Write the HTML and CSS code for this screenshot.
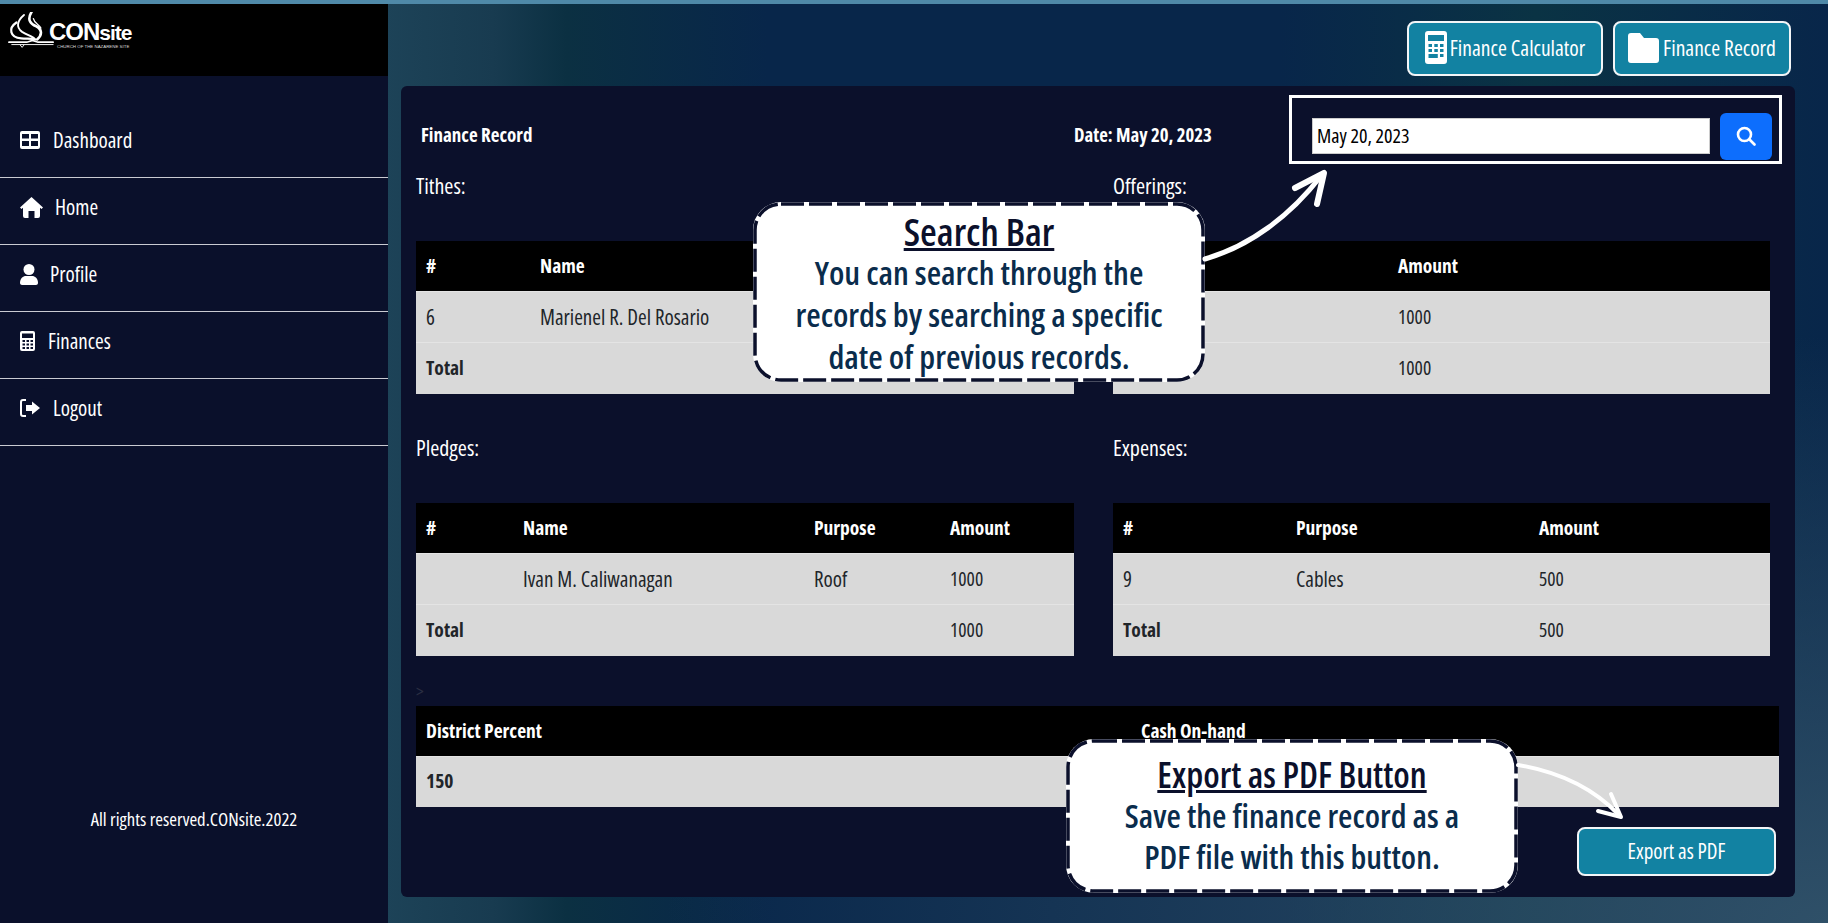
FILE: index.html
```html
<!DOCTYPE html>
<html lang="en">
<head>
    <meta charset="UTF-8">
    <meta name="viewport" content="width=device-width, initial-scale=1.0">
    <title>CONsite Finance Record</title>
    <link rel="stylesheet" href="styles.css">
</head>
<body>
    <div class="top-line"></div>
    <div class="layout">
        <aside class="sidebar">
            <div class="logo-bar">
                <svg class="logo-mark" viewBox="0 0 50 38" fill="none" stroke="#fff" stroke-linecap="round">
                    <path d="M9 11 C0 17 2 27 14 28 C20 28.500 25 28 29 29" stroke-width="2.400"/>
                    <path d="M17 3 C10 9 8 16 15 21 C20 24 26 26 28 28" stroke-width="2"/>
                    <path d="M25 0 C20 8 24 13 30 15 C36 18 37 24 31 29" stroke-width="2.800"/>
                    <path d="M27 7 C28 12 33 13 35 17" stroke-width="1.400"/>
                    <path d="M1 32 H20 L26 30 L32 32 H48" stroke-width="1.800"/>
                    <path d="M4 34.500 H48" stroke-width="1"/>
                    <path d="M13 35 L15 37.500 L17 35" stroke-width="1"/>
                </svg>
                <div class="logo-text">
                    <div class="logo-name">CON<span>site</span></div>
                    <div class="logo-sub">CHURCH OF THE NAZARENE SITE</div>
                </div>
            </div>
            <nav class="side-nav">
                <a class="nav-item" href="#">
                    <svg class="nav-icon" width="20" height="18" viewBox="0 0 20 18"><path fill="#fff" fill-rule="evenodd" d="M2 0h16a2 2 0 0 1 2 2v14a2 2 0 0 1-2 2H2a2 2 0 0 1-2-2V2a2 2 0 0 1 2-2zm0 3v4.500h7V3zm9 0v4.500h7V3zM2 10v5h7v-5zm9 0v5h7v-5z"/></svg>
                    Dashboard
                </a>
                <a class="nav-item home-item" href="#">
                    <svg class="nav-icon" width="23" height="21" viewBox="0 0 23 21"><path fill="#fff" d="M11.500 0 23 10.500l-1.500 1.500-1.500-1.300V19a2 2 0 0 1-2 2h-3.500v-7h-6v7H5a2 2 0 0 1-2-2v-8.300L1.500 12 0 10.500z"/></svg>
                    Home
                </a>
                <a class="nav-item profile-item" href="#">
                    <svg class="nav-icon" width="18" height="21" viewBox="0 0 18 21"><circle cx="9" cy="5.500" r="5.500" fill="#fff"/><path fill="#fff" d="M0 19c0-4.500 3-7 6-7h6c3 0 6 2.500 6 7 0 1.300-1 2-2 2H2c-1 0-2-.7-2-2z"/></svg>
                    Profile
                </a>
                <a class="nav-item" href="#">
                    <svg class="nav-icon" width="15" height="20" viewBox="0 0 15 20"><path fill="#fff" fill-rule="evenodd" d="M2 0h11a2 2 0 0 1 2 2v16a2 2 0 0 1-2 2H2a2 2 0 0 1-2-2V2a2 2 0 0 1 2-2zm0 2.500V7h11V2.500zM2.500 9v2H5V9zm4 0v2H9V9zm4 0v2H13V9zm-8 3.500v2H5v-2zm4 0v2H9v-2zm4 0v2H13v-2zm-8 3.500v2H5v-2zm4 0v2H9v-2zm4 0v2H13v-2z"/></svg>
                    Finances
                </a>
                <a class="nav-item" href="#">
                    <svg class="nav-icon" width="20" height="18" viewBox="0 0 20 18"><path fill="none" stroke="#fff" stroke-width="2" d="M6 1H3a2 2 0 0 0-2 2v12a2 2 0 0 0 2 2h3"/><path fill="#fff" d="M12 2.500 20 9l-8 6.500V12H6V6h6z"/></svg>
                    Logout
                </a>
            </nav>
            <p class="rights">All rights reserved.CONsite.2022</p>
        </aside>

        <main class="content">
            <div class="top-actions">
                <button class="teal-btn calc-btn">
                    <svg width="22" height="33" viewBox="0 0 22 33"><path fill="#fff" fill-rule="evenodd" d="M3 0h16a3 3 0 0 1 3 3v27a3 3 0 0 1-3 3H3a3 3 0 0 1-3-3V3a3 3 0 0 1 3-3zm0 4v6h16V4zm.5 9v3h3.500v-3zm5.800 0v3h3.500v-3zm5.700 0v3h3.500v-3zm-11.500 5v3h3.500v-3zm5.800 0v3h3.500v-3zm5.700 0v3h3.500v-3zm-11.500 5v4h9.300v-4zm11.500 0v3h3.500v-3z"/></svg>
                    Finance Calculator
                </button>
                <button class="teal-btn folder-btn">
                    <svg width="31" height="30" viewBox="0 0 31 30"><path fill="#fff" d="M3 0h9l4 5h12a3 3 0 0 1 3 3v19a3 3 0 0 1-3 3H3a3 3 0 0 1-3-3V3a3 3 0 0 1 3-3z"/></svg>
                    Finance Record
                </button>
            </div>

            <section class="record-card">
                <header class="record-head">
                    <h2 class="record-title">Finance Record</h2>
                    <div class="record-date">Date: May 20, 2023</div>
                    <form class="search-box">
                        <input class="search-input" type="text" value="May 20, 2023">
                        <button class="search-btn" type="button">
                            <svg width="20" height="20" viewBox="0 0 20 20" fill="none" stroke="#fff" stroke-width="2.600" stroke-linecap="round"><circle cx="8.500" cy="8.500" r="6.500"/><path d="M13.500 13.500 18.500 18.500"/></svg>
                        </button>
                    </form>
                </header>

                <div class="record-grid">
                    <div class="record-block">
                        <p class="block-label">Tithes:</p>
                        <table class="money-table tithes">
                            <thead><tr><th>#</th><th>Name</th><th></th></tr></thead>
                            <tbody>
                                <tr><td>6</td><td>Marienel R. Del Rosario</td><td></td></tr>
                                <tr class="total"><td>Total</td><td></td><td></td></tr>
                            </tbody>
                        </table>
                    </div>
                    <div class="record-block">
                        <p class="block-label">Offerings:</p>
                        <table class="money-table offerings">
                            <thead><tr><th></th><th>Amount</th></tr></thead>
                            <tbody>
                                <tr><td></td><td>1000</td></tr>
                                <tr class="total"><td></td><td>1000</td></tr>
                            </tbody>
                        </table>
                    </div>
                    <div class="record-block">
                        <p class="block-label">Pledges:</p>
                        <table class="money-table pledges">
                            <thead><tr><th>#</th><th>Name</th><th>Purpose</th><th>Amount</th></tr></thead>
                            <tbody>
                                <tr><td></td><td>Ivan M. Caliwanagan</td><td>Roof</td><td>1000</td></tr>
                                <tr class="total"><td>Total</td><td></td><td></td><td>1000</td></tr>
                            </tbody>
                        </table>
                    </div>
                    <div class="record-block">
                        <p class="block-label">Expenses:</p>
                        <table class="money-table expenses">
                            <thead><tr><th>#</th><th>Purpose</th><th>Amount</th></tr></thead>
                            <tbody>
                                <tr><td>9</td><td>Cables</td><td>500</td></tr>
                                <tr class="total"><td>Total</td><td></td><td>500</td></tr>
                            </tbody>
                        </table>
                    </div>
                </div>

                <div class="stray">&gt;</div>
                <table class="money-table district">
                    <thead><tr><th>District Percent</th><th>Cash On-hand</th></tr></thead>
                    <tbody>
                        <tr class="total"><td>150</td><td></td></tr>
                    </tbody>
                </table>

                <div class="export-row">
                    <button class="teal-btn export-btn">Export as PDF</button>
                </div>
            </section>
        </main>
    </div>

    <!-- tutorial callouts sit over the page -->
    <div class="callout callout-search">
        <svg class="dash-edge" viewBox="0 0 452 180"><rect x="2" y="2" width="448" height="176" rx="26"/></svg>
        <div class="callout-title">Search Bar</div>
        <div>You can search through the</div>
        <div>records by searching a specific</div>
        <div>date of previous records.</div>
    </div>
    <div class="callout callout-export">
        <svg class="dash-edge" viewBox="0 0 452 154"><rect x="2" y="2" width="448" height="150" rx="26"/></svg>
        <div class="callout-title">Export as PDF Button</div>
        <div>Save the finance record as a</div>
        <div>PDF file with this button.</div>
    </div>
    <svg class="arrows" width="1828" height="923" viewBox="0 0 1828 923" fill="none" stroke="#fff" stroke-linecap="round" stroke-linejoin="round">
        <path d="M1205 259 C1250 246 1290 216 1321 176" stroke-width="5"/>
        <path d="M1295 188 L1324 173 L1317 204" stroke-width="6"/>
        <path d="M1518 765 C1560 772 1595 790 1619 815" stroke-width="4"/>
        <path d="M1598 811 L1621 817 L1611 794" stroke-width="4"/>
    </svg>
</body>
</html>
```

FILE: styles.css
```css
html, body {
    height: 100%;
}

body {
    margin: 0;
    overflow: hidden;
    font-family: "Open Sans", "Roboto", sans-serif;
    font-stretch: 75%;
    font-size: 18px;
    color: #fff;
    background:
        radial-gradient(ellipse at 100% 100%, #2f5068 0%, rgba(47,80,104,0) 45%),
        linear-gradient(to right, #1d4358 21%, #183b50 27%, #0b3042 31%, #08264a 42%, #08264a 70%, #0a3344 84%, #08264a 100%);
}

.top-line {
    height: 4px;
    background-color: #4f89a8;
}

.layout {
    display: flex;
    height: 919px;
}

.sidebar {
    width: 388px;
    flex-shrink: 0;
    display: flex;
    flex-direction: column;
    background-color: #0a102b;
}

.logo-bar {
    height: 72px;
    box-sizing: border-box;
    padding: 8px 0 0 8px;
    display: flex;
    align-items: flex-start;
    background-color: #000;
}

.logo-mark {
    width: 47px;
    height: 36px;
    flex-shrink: 0;
}

.logo-text {
    margin: 9px 0 0 -6px;
}

.logo-name {
    font-family: "Liberation Sans", sans-serif;
    font-stretch: normal;
    font-weight: bold;
    font-size: 24px;
    line-height: 22px;
    letter-spacing: -1px;
}

.logo-name span {
    font-size: 21px;
}

.logo-sub {
    font-family: "Liberation Sans", sans-serif;
    font-stretch: normal;
    font-size: 4.400px;
    line-height: 6px;
    margin-left: 8px;
    color: #ddd;
    white-space: nowrap;
}

.side-nav {
    margin-top: 35px;
}

.nav-item {
    display: flex;
    align-items: center;
    gap: 13px;
    height: 58px;
    padding: 0 0 8px 20px;
    border-bottom: 1px solid #c9cbd2;
    color: #fff;
    text-decoration: none;
    font-size: 21px;
}

.home-item {
    gap: 12px;
}

.profile-item {
    gap: 12px;
}

.rights {
    margin: 360px 0 0;
    text-align: center;
    font-size: 18.700px;
}

.content {
    flex: 1;
    padding: 17px 33px 0 13px;
}

.top-actions {
    display: flex;
    justify-content: flex-end;
    gap: 10px;
    padding-right: 4px;
}

.teal-btn {
    display: flex;
    align-items: center;
    justify-content: center;
    box-sizing: border-box;
    border: 2px solid #f2f5f7;
    border-radius: 8px;
    padding: 0 0 2px;
    background-color: #1282a2;
    color: #fff;
    font-family: inherit;
    font-stretch: inherit;
    font-size: 21.500px;
    white-space: nowrap;
    cursor: pointer;
}

.calc-btn {
    width: 196px;
    height: 55px;
    gap: 3px;
}

.folder-btn {
    width: 178px;
    height: 55px;
    gap: 4px;
}

.record-card {
    box-sizing: border-box;
    height: 811px;
    margin-top: 10px;
    padding: 0 16px 0 15px;
    border-radius: 6px;
    background-color: #0b102b;
}

.record-head {
    display: flex;
    height: 89px;
    padding-top: 9px;
    box-sizing: border-box;
    margin-right: -3px;
}

.record-title {
    width: 658px;
    margin: 27px 0 0;
    padding-left: 5px;
    box-sizing: border-box;
    font-size: 19px;
    font-weight: bold;
}

.record-date {
    width: 215px;
    margin-top: 27px;
    font-size: 18.800px;
    font-weight: bold;
}

.search-box {
    display: flex;
    align-items: center;
    gap: 10px;
    box-sizing: border-box;
    width: 493px;
    height: 69px;
    padding: 13px 0 0 20px;
    border: 3px solid #fff;
}

.search-input {
    width: 398px;
    height: 36px;
    box-sizing: border-box;
    padding: 0 4px 2px;
    border: 1px solid #ccc;
    font-family: inherit;
    font-stretch: inherit;
    font-size: 20px;
    color: #000;
    background-color: #fff;
}

.search-btn {
    width: 52px;
    height: 47px;
    border: none;
    border-radius: 6px;
    background-color: #0d6efd;
    display: flex;
    align-items: center;
    justify-content: center;
}

.record-grid {
    display: grid;
    grid-template-columns: 658px 657px;
    column-gap: 39px;
    row-gap: 43px;
}

.block-label {
    height: 66px;
    margin: 0;
    font-size: 22px;
    line-height: 20px;
}

.money-table {
    width: 100%;
    table-layout: fixed;
    border-collapse: collapse;
    color: #212529;
    font-size: 21px;
}

.money-table th {
    height: 50px;
    padding: 0 10px;
    box-sizing: border-box;
    background-color: #000;
    color: #fff;
    text-align: left;
    font-size: 19.500px;
}

.money-table td {
    height: 51px;
    padding: 0 10px;
    box-sizing: border-box;
    background-color: #d9d9d9;
    border-top: 1px solid #e4e4e4;
}

.money-table td:last-child {
    font-size: 19.500px;
}

.money-table .total td {
    height: 52px;
    padding-bottom: 2px;
    font-size: 19.500px;
    font-weight: bold;
}

.money-table .total td:last-child {
    font-weight: normal;
}

.tithes th:nth-child(1) { width: 114px; }
.tithes th:nth-child(3) { width: 120px; }
.offerings th:nth-child(1) { width: 275px; }
.pledges th:nth-child(1) { width: 97px; }
.pledges th:nth-child(2) { width: 291px; }
.pledges th:nth-child(3) { width: 136px; }
.expenses th:nth-child(1) { width: 173px; }
.expenses th:nth-child(2) { width: 243px; }

.stray {
    height: 50px;
    padding-top: 25px;
    box-sizing: border-box;
    line-height: 20px;
    color: #2a2e42;
}

.district {
    width: 1363px;
}

.district th:first-child {
    width: 715px;
}

.district .total td {
    height: 51px;
}

.export-row {
    display: flex;
    justify-content: flex-end;
    margin-top: 20px;
    padding-right: 3px;
}

.export-btn {
    width: 199px;
    height: 49px;
    font-size: 21px;
}

.callout {
    position: absolute;
    box-sizing: border-box;
    display: flex;
    flex-direction: column;
    align-items: center;
    border-radius: 28px;
    background-color: #fff;
    color: #0a2c4c;
    font-size: 33.200px;
    font-weight: 600;
    line-height: 42px;
    white-space: nowrap;
}

.dash-edge {
    position: absolute;
    left: 0;
    top: 0;
    width: 100%;
    height: 100%;
}

.dash-edge rect {
    fill: none;
    stroke: #0b102b;
    stroke-width: 3.500;
    stroke-dasharray: 23 5;
}

.callout-title {
    color: #0b102b;
    font-size: 38.500px;
    text-decoration: underline;
}

.callout-search {
    left: 753px;
    top: 202px;
    width: 452px;
    height: 180px;
    padding-top: 8px;
}

.callout-export {
    left: 1066px;
    top: 739px;
    width: 452px;
    height: 154px;
    padding-top: 15px;
    font-size: 33px;
    line-height: 41px;
}

.callout-export .callout-title {
    font-size: 35.500px;
}

.arrows {
    position: absolute;
    left: 0;
    top: 0;
    pointer-events: none;
}
```
